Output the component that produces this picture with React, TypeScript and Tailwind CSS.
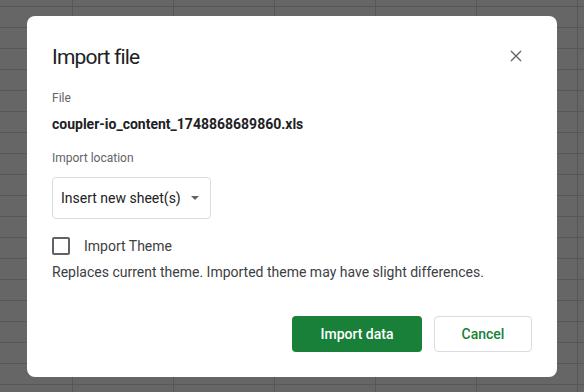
import React, { useState } from 'react';

const font = "font-['Roboto','Liberation_Sans',sans-serif]";

const App: React.FC = () => {
    const [importTheme, setImportTheme] = useState(false);

    return (
        <div className={`${font} w-[584px] h-[392px] overflow-hidden bg-[#666666] bg-[linear-gradient(to_right,#575757_1px,transparent_1px),linear-gradient(to_bottom,#575757_1px,transparent_1px)] bg-[size:101px_21px] bg-[position:72px_6px] pl-[27px] pt-[16px]`}>
            <div className="w-[530px] bg-white rounded-[8px] pt-[27px] pl-[25px] pr-[25px] pb-[25px] flex flex-col">
                {/* header */}
                <div className="flex items-center justify-between h-[28px]">
                    <h2 className="text-[21px] leading-[28px] tracking-[-0.8px] text-[#202124] font-normal">Import file</h2>
                    <button className="w-6 h-6 flex items-center justify-center mr-[4px] -mt-[3px]">
                        <svg width="12" height="12" viewBox="0 0 12 12">
                            <path d="M1 1L11 11M11 1L1 11" stroke="#5f6368" strokeWidth="1.4" />
                        </svg>
                    </button>
                </div>

                <div className="mt-[19px] text-[12px] leading-[16px] text-[#5f6368]">File</div>
                <div className="mt-2 text-[14px] leading-[20px] font-bold text-[#202124]">coupler-io_content_1748868689860.xls</div>

                <div className="mt-[16px] text-[12px] leading-[16px] text-[#5f6368]">Import location</div>
                <button className="mt-[11px] w-[159px] h-[42px] border border-[#dadce0] rounded-[4px] flex items-center pl-2 text-[14px] text-[#202124]">
                    <span>Insert new sheet(s)</span>
                    <svg className="ml-[10px]" width="8" height="4" viewBox="0 0 8 4">
                        <path d="M0 0L4 4L8 0Z" fill="#5f6368" />
                    </svg>
                </button>

                <label className="mt-[17px] h-[20px] flex items-center cursor-pointer">
                    <span
                        onClick={() => setImportTheme(!importTheme)}
                        className="w-[18px] h-[18px] border-2 border-[#5f6368] rounded-[2px]"
                    />
                    <span className="ml-[14px] text-[14px] text-[#3c4043]">Import Theme</span>
                </label>
                <p className="mt-[6px] text-[14px] leading-[20px] text-[#3c4043]">Replaces current theme. Imported theme may have slight differences.</p>

                <div className="mt-[34px] flex justify-end gap-3">
                    <button className="w-[130px] h-[36px] rounded-[4px] bg-[#188038] text-white text-[14px] font-medium">Import data</button>
                    <button className="w-[98px] h-[36px] rounded-[4px] border border-[#dadce0] bg-white text-[#188038] text-[14px] font-medium">Cancel</button>
                </div>
            </div>
        </div>
    );
};

export default App;
